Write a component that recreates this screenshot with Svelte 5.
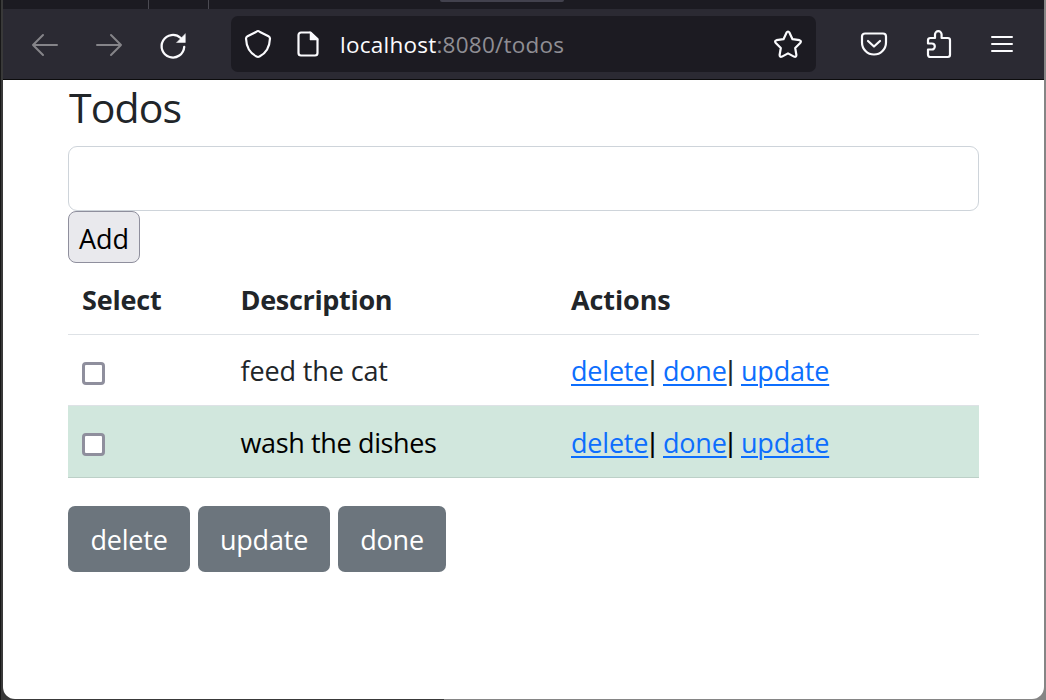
<script>
  let todos = $state([
    { text: 'feed the cat', done: false, selected: false },
    { text: 'wash the dishes', done: true, selected: false },
  ]);
  let draft = $state('');
</script>

<div class="desktop">
  <div class="window">
    <div class="tabs"><span class="tab first"></span><span class="tab second"></span><span class="active"></span></div>
    <header class="toolbar">
      <svg class="back" width="28" height="24" viewBox="0 0 28 24"><path d="M26 12H2M12 2 2 12l10 10" /></svg>
      <svg class="forward" width="28" height="24" viewBox="0 0 28 24"><path d="M2 12h24M16 2l10 10-10 10" /></svg>
      <svg class="reload" width="28" height="28" viewBox="0 0 28 28"><path d="M25.200 15A11.300 11.300 0 1 1 21.700 6" /><path class="solid" d="M26.300 2v8.500h-8.500z" /></svg>
      <div class="urlbar">
        <svg class="shield" width="28" height="30" viewBox="0 0 28 30"><path d="M14 2 Q14.7 2 16 3L24.5 7.2Q26 8 26 9.5C25.6 18 22.5 24 15.5 27.5Q14 28.2 12.5 27.5C5.5 24 2.4 18 2 9.5Q2 8 3.500 7.200L12 3Q13.300 2 14 2Z" /></svg>
        <svg class="page" width="24" height="28" viewBox="0 0 24 28"><path d="M14.500 2.500H5a2.500 2.500 0 0 0-2.500 2.500v18a2.500 2.500 0 0 0 2.500 2.500h14a2.500 2.500 0 0 0 2.500-2.500V9Z" /><path class="solid" d="M14 2v8h8z" /></svg>
        <span class="url"><span class="host">localhost</span>:8080/todos</span>
        <svg class="star" width="30" height="30" viewBox="0 0 30 30"><path d="M13.500 3.700Q15 1.300 16.500 3.700L19.500 10.200L26.500 11.200Q28.900 12 27.200 14L22.200 19L23.400 26Q23.300 28.500 21 27.600L15 24.400L9 27.600Q6.700 28.500 6.600 26L7.800 19L2.800 14Q1.100 12 3.500 11.200L10.500 10.200Z" /></svg>
      </div>
      <svg class="pocket" width="28" height="26" viewBox="0 0 28 26"><path d="M5 2.500h18a3 3 0 0 1 3 3v6a12 12 0 0 1-24 0v-6a3 3 0 0 1 3-3ZM8 10l6 5.500 6-5.500" /></svg>
      <svg class="puzzle" width="26" height="30" viewBox="0 0 26 30"><path d="M9 9V5.500a3.300 3.300 0 0 1 6.600 0V9h6.200a2.200 2.200 0 0 1 2.200 2.200v14.600a2.200 2.200 0 0 1-2.200 2.200H4.200A2.200 2.200 0 0 1 2 25.800V20.500h3.800a3 3 0 0 0 0-6H2V11.200A2.200 2.200 0 0 1 4.200 9Z" /></svg>
      <svg class="menu" width="24" height="20" viewBox="0 0 24 20"><path d="M2 3h20M2 10h20M2 17h20" /></svg>
    </header>

    <main>
      <h1><span>Todos</span></h1>
      <input class="field" type="text" bind:value={draft} aria-label="New todo" />
      <button class="add">Add</button>
      <div class="table">
        <div class="row head">
          <span class="sel">Select</span><span class="desc">Description</span><span class="act">Actions</span>
        </div>
        {#each todos as todo}
          <div class="row" class:success={todo.done}>
            <span class="cell"><input class="check" type="checkbox" bind:checked={todo.selected} aria-label={todo.text} /></span>
            <span class="text">{todo.text}</span>
            <span class="links"><a class="l1" href="#delete">delete</a><i>|</i><a class="l2" href="#done">done</a><i>|</i><a class="l3" href="#update">update</a></span>
          </div>
        {/each}
      </div>
      <div class="buttons">
        <button class="b1">delete</button>
        <button class="b2">update</button>
        <button class="b3">done</button>
      </div>
    </main>
  </div>
</div>

<style>
  :global(body) { margin: 0; background: #393939; }
  * { box-sizing: border-box; }
  .desktop {
    width: 1046px; height: 700px; overflow: hidden; padding: 0 2px 1px 3px;
    background: linear-gradient(90deg, #171717 0 1px, #393939 1px 444px, #858585 444px);
    font: 27px/42px "Open Sans", "Noto Sans", sans-serif;
  }
  .window { height: 699px; background: #fff; border-radius: 0 0 12px 12px; overflow: hidden; }
  .tabs { height: 9px; background: #1c1b22; display: flex; }
  .tab { border-right: 1px solid #4b4a52; height: 9px; }
  .first { width: 146px; }
  .second { width: 60px; }
  .active { width: 124px; height: 2px; margin-left: 231px; background: #42414d; border-radius: 0 0 4px 4px; }
  .toolbar { height: 71px; background: #2b2a33; border-bottom: 1px solid #0c0c0d; display: flex; align-items: center; }
  svg { fill: none; stroke: #fbfbfe; stroke-width: 2.200; stroke-linecap: round; stroke-linejoin: round; flex: none; }
  .solid { fill: #fbfbfe; stroke-width: 0.5; }
  .back, .forward { stroke: #858489; stroke-width: 2; margin-top: 2px; }
  .back { margin-left: 28px; }
  .forward { margin-left: 36px; }
  .reload { margin-left: 36px; stroke-width: 2.300; margin-top: 4px; }
  .urlbar { width: 585px; height: 56px; margin-left: 44px; background: #1c1b22; border-radius: 7px; display: flex; align-items: center; flex: none; }
  .shield { margin-left: 13px; }
  .page { margin-left: 24px; }
  .url { font-size: 22.500px; line-height: 34px; color: #8f8e94; margin-left: 20px; margin-top: 2px; white-space: nowrap; width: 433px; letter-spacing: 0.240px; }
  .host { color: #fbfbfe; }
  .pocket { margin-left: 44px; }
  .puzzle { margin-left: 38px; }
  .menu { margin-left: 38px; stroke-width: 2; }
  main { padding: 0 65px; color: #212529; }
  h1 { margin: 0; height: 66px; font-size: 41px; font-weight: 400; line-height: 55px; letter-spacing: -0.900px; padding-left: 1px; }
  .field { display: block; width: 911px; height: 65px; border: 1px solid #ced4da; border-radius: 9px; padding: 10px 20px; font: inherit; background: #fff; outline: none; }
  button { font: inherit; padding: 0; display: flex; justify-content: center; align-items: center; white-space: nowrap; }
  .add { width: 72px; height: 52px; border: 1px solid #8f8f9d; border-radius: 8px; background: #e9e9ed; color: #000; padding-top: 4px; }
  .row { width: 911px; height: 71px; border-bottom: 1px solid #dee2e6; display: grid; grid-template-columns: 158.500px 330.500px 1fr; align-items: center; padding: 2px 0 0 14px; white-space: nowrap; }
  .head { height: 72px; font-weight: 700; }
  .sel { letter-spacing: -0.200px; }
  .desc { letter-spacing: -0.320px; }
  .act { letter-spacing: -0.100px; }
  .text { letter-spacing: -0.130px; }
  .success .text { letter-spacing: -0.360px; }
  .row.success { height: 72px; background: #d1e7dd; border-color: #bcd0c7; color: #000; }
  .cell { display: flex; }
  .check { appearance: none; width: 23px; height: 23px; margin: 4px 0 0; border: 3px solid #8f8f9d; border-radius: 4px; background: #fff; }
  .links { display: flex; letter-spacing: -0.200px; }
  a { color: #0d6efd; text-decoration: underline; text-decoration-thickness: 2px; text-underline-offset: 3px; }
  i { font-family: "Liberation Sans", sans-serif; font-style: normal; width: 14px; display: block; }
  .l1 { width: 78px; }
  .l2 { width: 64px; }
  .buttons { display: flex; gap: 8px; margin-top: 28px; letter-spacing: -0.200px; }
  .buttons button { height: 66px; border: 0; border-radius: 7px; background: #6c757d; color: #fff; padding-top: 2px; letter-spacing: -0.200px; }
  .b1 { width: 122px; }
  .b2 { width: 132px; }
  .b3 { width: 108px; }
</style>
